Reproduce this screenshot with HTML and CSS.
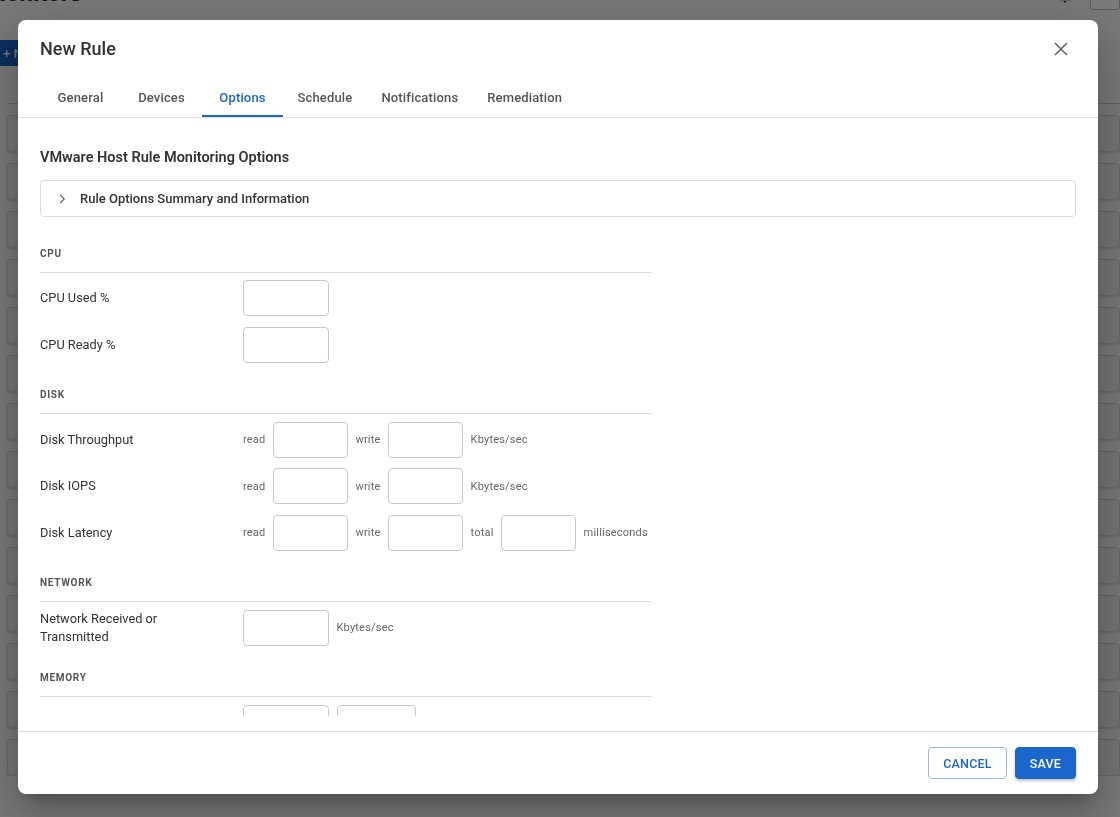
FILE: index.html
```html
<!DOCTYPE html>
<html lang="en">
<head>
  <meta charset="UTF-8">
  <meta name="viewport" content="width=device-width, initial-scale=1">
  <title>Monitors - New Rule</title>
  <link rel="stylesheet" href="styles.css">
</head>
<body>
  <!-- page behind the dialog -->
  <div class="page">
    <div class="page-head">
      <h1>Monitors</h1>
      <div class="head-tools">
        <svg class="bell" viewBox="0 0 24 24" width="18" height="18"><path d="M12 22c1.1 0 2-.9 2-2h-4c0 1.1.9 2 2 2zm6-6v-5c0-3.07-1.64-5.64-4.5-6.32V4c0-.83-.67-1.5-1.5-1.5s-1.5.67-1.5 1.5v.68C7.63 5.36 6 7.92 6 11v5l-2 2v1h16v-1l-2-2z" fill="#333"/></svg>
        <span class="head-btn"></span>
      </div>
    </div>
    <button class="new-btn">+ New</button>
    <div class="list">
      <div class="list-head"></div>
      <div class="list-row"></div>
      <div class="list-row"></div>
      <div class="list-row"></div>
      <div class="list-row"></div>
      <div class="list-row"></div>
      <div class="list-row"></div>
      <div class="list-row"></div>
      <div class="list-row"></div>
      <div class="list-row"></div>
      <div class="list-row"></div>
      <div class="list-row"></div>
      <div class="list-row"></div>
      <div class="list-row"></div>
      <div class="list-row"></div>
    </div>
  </div>

  <div class="overlay">
    <div class="dialog">
      <div class="dialog-head">
        <h2>New Rule</h2>
        <button class="close" title="Close">
          <svg viewBox="0 0 14 14" width="14" height="14"><path d="M1 1l12 12M13 1L1 13" stroke="#666" stroke-width="1.6" fill="none"/></svg>
        </button>
      </div>

      <div class="tabs">
        <div class="tab">General</div>
        <div class="tab">Devices</div>
        <div class="tab active">Options</div>
        <div class="tab">Schedule</div>
        <div class="tab">Notifications</div>
        <div class="tab">Remediation</div>
      </div>

      <div class="dialog-body">
        <h3 class="options-title">VMware Host Rule Monitoring Options</h3>

        <div class="accordion">
          <svg viewBox="0 0 24 24" width="18" height="18"><path d="M9.5 6.5l5.5 5.5-5.5 5.5" stroke="#555" stroke-width="1.5" fill="none"/></svg>
          <span>Rule Options Summary and Information</span>
        </div>

        <div class="section first">
          <div class="section-title">CPU</div>
          <div class="row">
            <div class="row-label">CPU Used %</div>
            <div class="controls"><input class="field"></div>
          </div>
          <div class="row">
            <div class="row-label">CPU Ready %</div>
            <div class="controls"><input class="field"></div>
          </div>
        </div>

        <div class="section">
          <div class="section-title">Disk</div>
          <div class="row">
            <div class="row-label">Disk Throughput</div>
            <div class="controls">
              <span class="unit">read</span><input class="field sm">
              <span class="unit">write</span><input class="field sm">
              <span class="unit">Kbytes/sec</span>
            </div>
          </div>
          <div class="row">
            <div class="row-label">Disk IOPS</div>
            <div class="controls">
              <span class="unit">read</span><input class="field sm">
              <span class="unit">write</span><input class="field sm">
              <span class="unit">Kbytes/sec</span>
            </div>
          </div>
          <div class="row">
            <div class="row-label">Disk Latency</div>
            <div class="controls">
              <span class="unit">read</span><input class="field sm">
              <span class="unit">write</span><input class="field sm">
              <span class="unit">total</span><input class="field sm">
              <span class="unit">milliseconds</span>
            </div>
          </div>
        </div>

        <div class="section">
          <div class="section-title">Network</div>
          <div class="row">
            <div class="row-label">Network Received or<br>Transmitted</div>
            <div class="controls">
              <input class="field">
              <span class="unit">Kbytes/sec</span>
            </div>
          </div>
        </div>

        <div class="section">
          <div class="section-title">Memory</div>
          <div class="row">
            <div class="row-label">Memory Used</div>
            <div class="controls">
              <input class="field">
              <div class="select">%</div>
            </div>
          </div>
        </div>
      </div>

      <div class="dialog-foot">
        <button class="btn outline">Cancel</button>
        <button class="btn primary">Save</button>
      </div>
    </div>
  </div>
</body>
</html>
```

FILE: styles.css
```css
* {
  box-sizing: border-box;
}

body {
  margin: 0;
  font-family: Roboto, "Noto Sans", sans-serif;
  background: #fafafa;
  color: #333;
  overflow: hidden;
}

/* background page */
.page {
  padding: 0 0 0 7px;
}

.page-head {
  display: flex;
  justify-content: space-between;
  height: 30px;
}

.page-head h1 {
  margin: -22px 0 0 -22px;
  font-size: 24px;
  line-height: 30px;
  font-weight: 700;
  color: #222;
}

.head-tools {
  display: flex;
  gap: 16px;
  margin-top: -14px;
}

.head-btn {
  width: 30px;
  height: 24px;
  border: 1px solid #bbb;
  border-radius: 4px;
  background: #fff;
}

.new-btn {
  margin: 10px 0 0 -14px;
  height: 26px;
  padding: 0 10px;
  border: none;
  border-radius: 4px;
  background: #1a5fc4;
  color: #fff;
  font-family: inherit;
  font-size: 13px;
}

.list {
  margin-top: 17px;
  display: flex;
  flex-direction: column;
  gap: 11px;
}

.list-head {
  height: 21px;
  border-bottom: 1px solid #ccc;
}

.list-row {
  height: 37px;
  background: #f2f2f2;
  border: 1px solid #d4d4d4;
  border-radius: 4px;
  box-shadow: 0 1px 2px rgba(0,0,0,0.15);
}

/* dialog */
.overlay {
  position: fixed;
  inset: 0;
  background: rgba(0,0,0,0.52);
  padding: 20px 22px 0 18px;
}

.dialog {
  height: 774px;
  background: #fff;
  border-radius: 8px;
  display: flex;
  flex-direction: column;
  overflow: hidden;
  box-shadow: 0 11px 15px -7px rgba(0,0,0,0.2), 0 24px 38px 3px rgba(0,0,0,0.14), 0 9px 46px 8px rgba(0,0,0,0.12);
}

.dialog-head {
  display: flex;
  justify-content: space-between;
  align-items: center;
  padding: 17px 22px 0;
}

.dialog-head h2 {
  margin: 0;
  font-size: 18px;
  line-height: 24px;
  font-weight: 500;
  color: #333;
}

.close {
  width: 30px;
  height: 30px;
  margin: -3px 0;
  padding: 0;
  border: none;
  background: none;
  display: flex;
  align-items: center;
  justify-content: center;
  cursor: pointer;
}

.tabs {
  display: flex;
  margin-top: 16px;
  padding: 0 22px;
  border-bottom: 1px solid #e0e0e0;
}

.tab {
  position: relative;
  height: 40px;
  min-width: 81px;
  padding: 0 14.5px;
  display: flex;
  align-items: center;
  justify-content: center;
  font-size: 13px;
  font-weight: 500;
  letter-spacing: 0.15px;
  color: #555;
}

.tab.active {
  color: #1a66cc;
}

.tab.active::after {
  content: "";
  position: absolute;
  left: 0;
  right: 0;
  bottom: 0;
  height: 2px;
  background: #1a66cc;
}

.dialog-body {
  flex: 1;
  overflow: hidden;
  padding: 29px 22px 0;
  margin-bottom: 15px;
}

.options-title {
  margin: 0;
  font-size: 14.5px;
  line-height: 21px;
  font-weight: 600;
  color: #333;
}

.accordion {
  margin-top: 12px;
  height: 37px;
  border: 1px solid #dcdcdc;
  border-radius: 4px;
  display: flex;
  align-items: center;
  gap: 9px;
  padding-left: 12px;
  font-size: 13px;
  font-weight: 500;
  color: #333;
}

.section {
  width: 612px;
  margin-top: 24px;
}

.section.first {
  margin-top: 29px;
}

.section-title {
  font-size: 10px;
  line-height: 15px;
  font-weight: 700;
  letter-spacing: 0.7px;
  text-transform: uppercase;
  color: #555;
  padding-bottom: 11px;
  border-bottom: 1px solid #ddd;
}

.row {
  display: flex;
  align-items: center;
  margin-top: 10.5px;
}

.section-title + .row {
  margin-top: 8px;
}

.section.first .section-title + .row {
  margin-top: 7px;
}

.row-label {
  width: 203px;
  font-size: 12.8px;
  line-height: 18px;
  color: #333;
}

.controls {
  display: flex;
  align-items: center;
  gap: 7.5px;
}

.field {
  width: 86px;
  height: 36px;
  border: 1px solid #c8c8c8;
  border-radius: 4px;
  font-family: inherit;
  font-size: 13px;
  padding: 0 8px;
}

.field.sm {
  width: 75px;
}

.select {
  width: 79px;
  height: 36px;
  border: 1px solid #c8c8c8;
  border-radius: 4px;
  padding: 0 10px;
  display: flex;
  align-items: center;
  font-size: 12.5px;
}

.unit {
  font-size: 11px;
  letter-spacing: 0.2px;
  color: #666;
}

.dialog-foot {
  border-top: 1px solid #e0e0e0;
  padding: 15px 22px;
  display: flex;
  justify-content: flex-end;
  gap: 8px;
}

.btn {
  height: 32px;
  padding: 0 14px;
  border-radius: 4px;
  font-family: inherit;
  font-size: 12.5px;
  font-weight: 500;
  letter-spacing: 0.2px;
  text-transform: uppercase;
  cursor: pointer;
}

.btn.outline {
  background: #fff;
  border: 1px solid #9bb7e0;
  color: #1a66cc;
}

.btn.primary {
  background: #1a66cc;
  border: 1px solid #1a66cc;
  color: #fff;
  box-shadow: 0 2px 3px rgba(0,0,0,0.25);
}
```
